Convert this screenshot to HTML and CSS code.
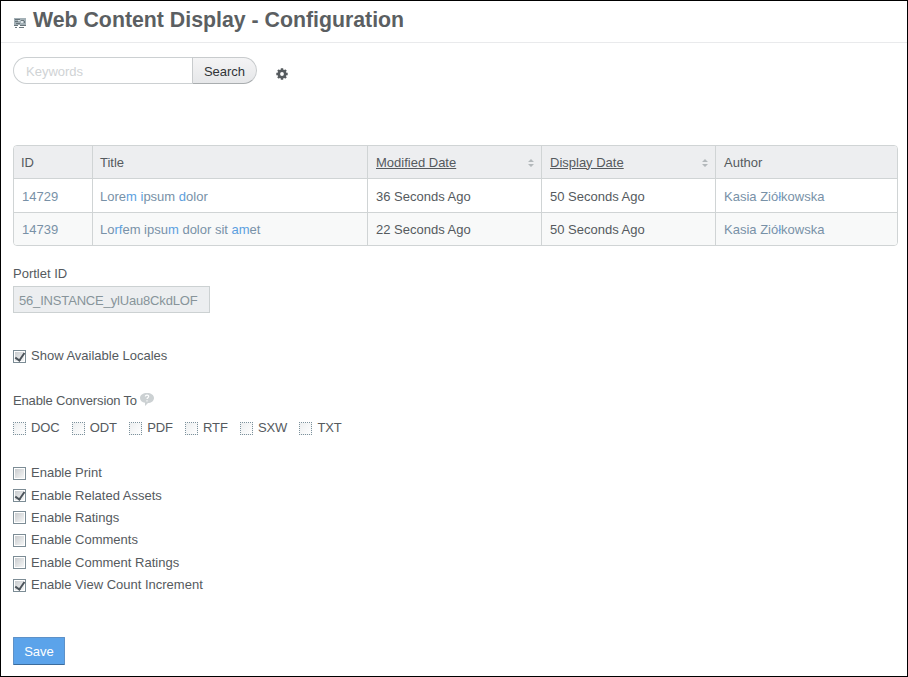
FILE: index.html
```html
<!DOCTYPE html>
<html lang="en">
<head>
<meta charset="utf-8">
<title>Web Content Display - Configuration</title>
<link rel="stylesheet" href="styles.css">
</head>
<body>
<header class="title-bar">
  <svg class="portlet-icon" width="13" height="12" viewBox="0 0 13 12" shape-rendering="crispEdges">
    <path fill="#a3b0b6" d="M0 1h12v7H0z"/>
    <path fill="#69757b" d="M1 2h5v1H1zM1 4h3v1H1zM2 6h4v1H2zM7 3h3v1H7zM10 4h1v2h-1zM0 8h4v1H0zM6 8h6v1H6zM1 10h2v1H1zM5 10h5v1H5z"/>
    <path fill="#dfe6e9" d="M4 3h2v1H4zM7 4h2v2H7z"/>
  </svg>
  <h1>Web Content Display - Configuration</h1>
</header>
<main>
  <form class="search">
    <input class="keywords" type="text" placeholder="Keywords">
    <button class="search-button" type="button">Search</button>
    <svg class="gear" width="12" height="12" viewBox="0 0 12 12">
      <path stroke="#565b5f" stroke-width="2.4" d="M6 .3v11.400M.3 6h11.400M2 2l8 8M10 2l-8 8"/>
      <circle cx="6" cy="6" r="3.200" fill="#fff" stroke="#565b5f" stroke-width="2.600"/>
    </svg>
  </form>
  <table class="results">
    <colgroup><col class="c-id"><col class="c-title"><col class="c-date"><col class="c-date"><col class="c-author"></colgroup>
    <thead>
      <tr>
        <th>ID</th><th>Title</th>
        <th><div class="sortable"><span>Modified Date</span><svg width="6" height="8" viewBox="0 0 6 8"><path fill="#b3b8bb" d="M3 0L6 3H0zM3 8L0 5h6z"/></svg></div></th>
        <th><div class="sortable"><span>Display Date</span><svg width="6" height="8" viewBox="0 0 6 8"><path fill="#b3b8bb" d="M3 0L6 3H0zM3 8L0 5h6z"/></svg></div></th>
        <th>Author</th>
      </tr>
    </thead>
    <tbody>
      <tr><td><a>14729</a></td><td><a>Lore<b>m</b> <b>i</b>psum <b>d</b>olor</a></td><td>36 Seconds Ago</td><td>50 Seconds Ago</td><td><a>Kasia Zió<b>ł</b>kowska</a></td></tr>
      <tr><td><a>14739</a></td><td><a>Lo<b>rf</b>em ipsu<b>m</b> dolor sit <b>am</b>et</a></td><td>22 Seconds Ago</td><td>50 Seconds Ago</td><td><a>Kasia Zió<b>ł</b>kowska</a></td></tr>
    </tbody>
  </table>
  <label class="field-label" for="portlet">Portlet ID</label>
  <input class="portlet-id" id="portlet" value="56_INSTANCE_ylUau8CkdLOF" disabled>
  <label class="check locales"><input type="checkbox" checked>Show Available Locales</label>
  <div class="conversion-label">Enable Conversion To
    <svg width="14" height="13" viewBox="0 0 14 13"><path fill="#ccd1d3" d="M7 0c4 0 7 2 7 5s-3 5-6 5l-3 3V9.700C2 9.300 0 7.500 0 5c0-3 3-5 7-5z"/><path fill="none" stroke="#fff" stroke-width="1.200" d="M5.300 3.500c.2-2 3.500-1.700 3.400 0C8.600 4.700 7.200 4.600 7 6M7 7.200v1.200"/></svg>
  </div>
  <div class="formats">
    <label class="check dotted"><input type="checkbox">DOC</label>
    <label class="check dotted"><input type="checkbox">ODT</label>
    <label class="check dotted"><input type="checkbox">PDF</label>
    <label class="check dotted"><input type="checkbox">RTF</label>
    <label class="check dotted"><input type="checkbox">SXW</label>
    <label class="check dotted"><input type="checkbox">TXT</label>
  </div>
  <div class="options">
    <label class="check"><input type="checkbox">Enable Print</label>
    <label class="check"><input type="checkbox" checked>Enable Related Assets</label>
    <label class="check"><input type="checkbox">Enable Ratings</label>
    <label class="check"><input type="checkbox">Enable Comments</label>
    <label class="check"><input type="checkbox">Enable Comment Ratings</label>
    <label class="check"><input type="checkbox" checked>Enable View Count Increment</label>
  </div>
  <button class="save" type="button">Save</button>
</main>
</body>
</html>
```
FILE: styles.css
```css
* { box-sizing: border-box; }
body {
  margin: 0;
  height: 677px;
  border: 1px solid #000;
  background: #fff;
  color: #555a5e;
  font: 13px/20px "Liberation Sans", Arial, sans-serif;
  overflow: hidden;
}
input, button { font: inherit; letter-spacing: inherit; margin: 0; }
.title-bar {
  display: flex;
  height: 42px;
  padding: 0 13px;
  border-bottom: 1px solid #e9eaec;
}
.portlet-icon { margin: 16px 6px 0 0; }
h1 { margin: 0; font-size: 21.3px; line-height: 39px; color: #5b5f62; }
main { display: flex; flex-direction: column; align-items: flex-start; padding: 14px 9px 0 12px; }
.search { display: flex; height: 27px; }
.keywords {
  width: 179px;
  padding: 2px 12px 0 12px;
  border: 1px solid #ccd0d2;
  border-right: 0;
  border-radius: 14px 0 0 14px;
}
.keywords::placeholder { color: #d0d3d5; }
.search-button {
  width: 65px;
  padding: 2px 0 0;
  border: 1px solid #c8cbcd;
  border-bottom-color: #a9adaf;
  border-radius: 0 14px 14px 0;
  background: linear-gradient(#f4f4f5, #e6e7e9);
  color: #303437;
}
.gear { margin: 11px 0 0 19px; }
.results {
  width: 885px;
  margin-top: 61px;
  table-layout: fixed;
  border: 1px solid #d0d4d5;
  border-radius: 4px;
  border-spacing: 0;
  overflow: hidden;
}
.c-id { width: 78px; }
.c-title { width: 275px; }
.c-date { width: 174px; }
.c-author { width: 182px; }
th, td { height: 32px; padding: 1px 8px 0 8px; border-left: 1px solid #d0d4d5; text-align: left; font-weight: normal; }
th:first-child { padding-left: 7px; }
th:nth-child(2), td:nth-child(2) { padding-left: 7px; }
th:first-child, td:first-child { border-left: 0; }
th { background: #edeef0; }
td { height: 34px; padding-top: 2px; border-top: 1px solid #d0d4d5; }
tbody tr:last-child td { height: 33px; padding-top: 1px; background: #f8f9f9; }
.sortable { display: flex; align-items: center; justify-content: space-between; text-decoration: underline; }
.sortable svg { margin: 1px -1px 0 0; }
a { color: #7891a7; }
a b { font-weight: normal; color: #5b9fdf; }
.field-label { margin-top: 18px; }
.portlet-id {
  width: 197px;
  height: 27px;
  margin-top: 2px;
  padding: 2px 5px 0;
  border: 1px solid #ccd1d2;
  background: #eceef0;
  color: #87949a;
  letter-spacing: -0.17px;
}
.check { display: flex; align-items: center; }
.check input {
  appearance: none;
  width: 13px;
  height: 13px;
  margin: 0 5px 0 0;
  border: 1px solid #7c8c95;
  background: linear-gradient(135deg, #c9cccf, #f5f6f6) center / 9px 9px no-repeat;
}
.check input:checked { position: relative; }
.check input:checked::after {
  content: "";
  position: absolute;
  left: 3px;
  top: 0;
  width: 4px;
  height: 8px;
  border: solid #4b535a;
  border-width: 0 2px 2px 0;
  transform: rotate(35deg);
}
.locales { margin-top: 33px; }
.conversion-label { margin-top: 25px; letter-spacing: -0.15px; }
.conversion-label svg { vertical-align: -1px; }
.formats { display: flex; gap: 12.2px; margin-top: 7px; letter-spacing: -0.1px; }
.check.dotted input { border: 1px dotted #7c919c; background: linear-gradient(135deg, #edeff0, #fff); }
.options { display: grid; grid-auto-rows: 22.4px; margin-top: 24px; }
.save {
  width: 52px;
  height: 28px;
  margin-top: 41px;
  padding: 1px 0 0;
  border: 1px solid #5d91c8;
  border-bottom-color: #3c6c9c;
  border-radius: 1px;
  background: #5ba3ea;
  color: #fff;
}
```
